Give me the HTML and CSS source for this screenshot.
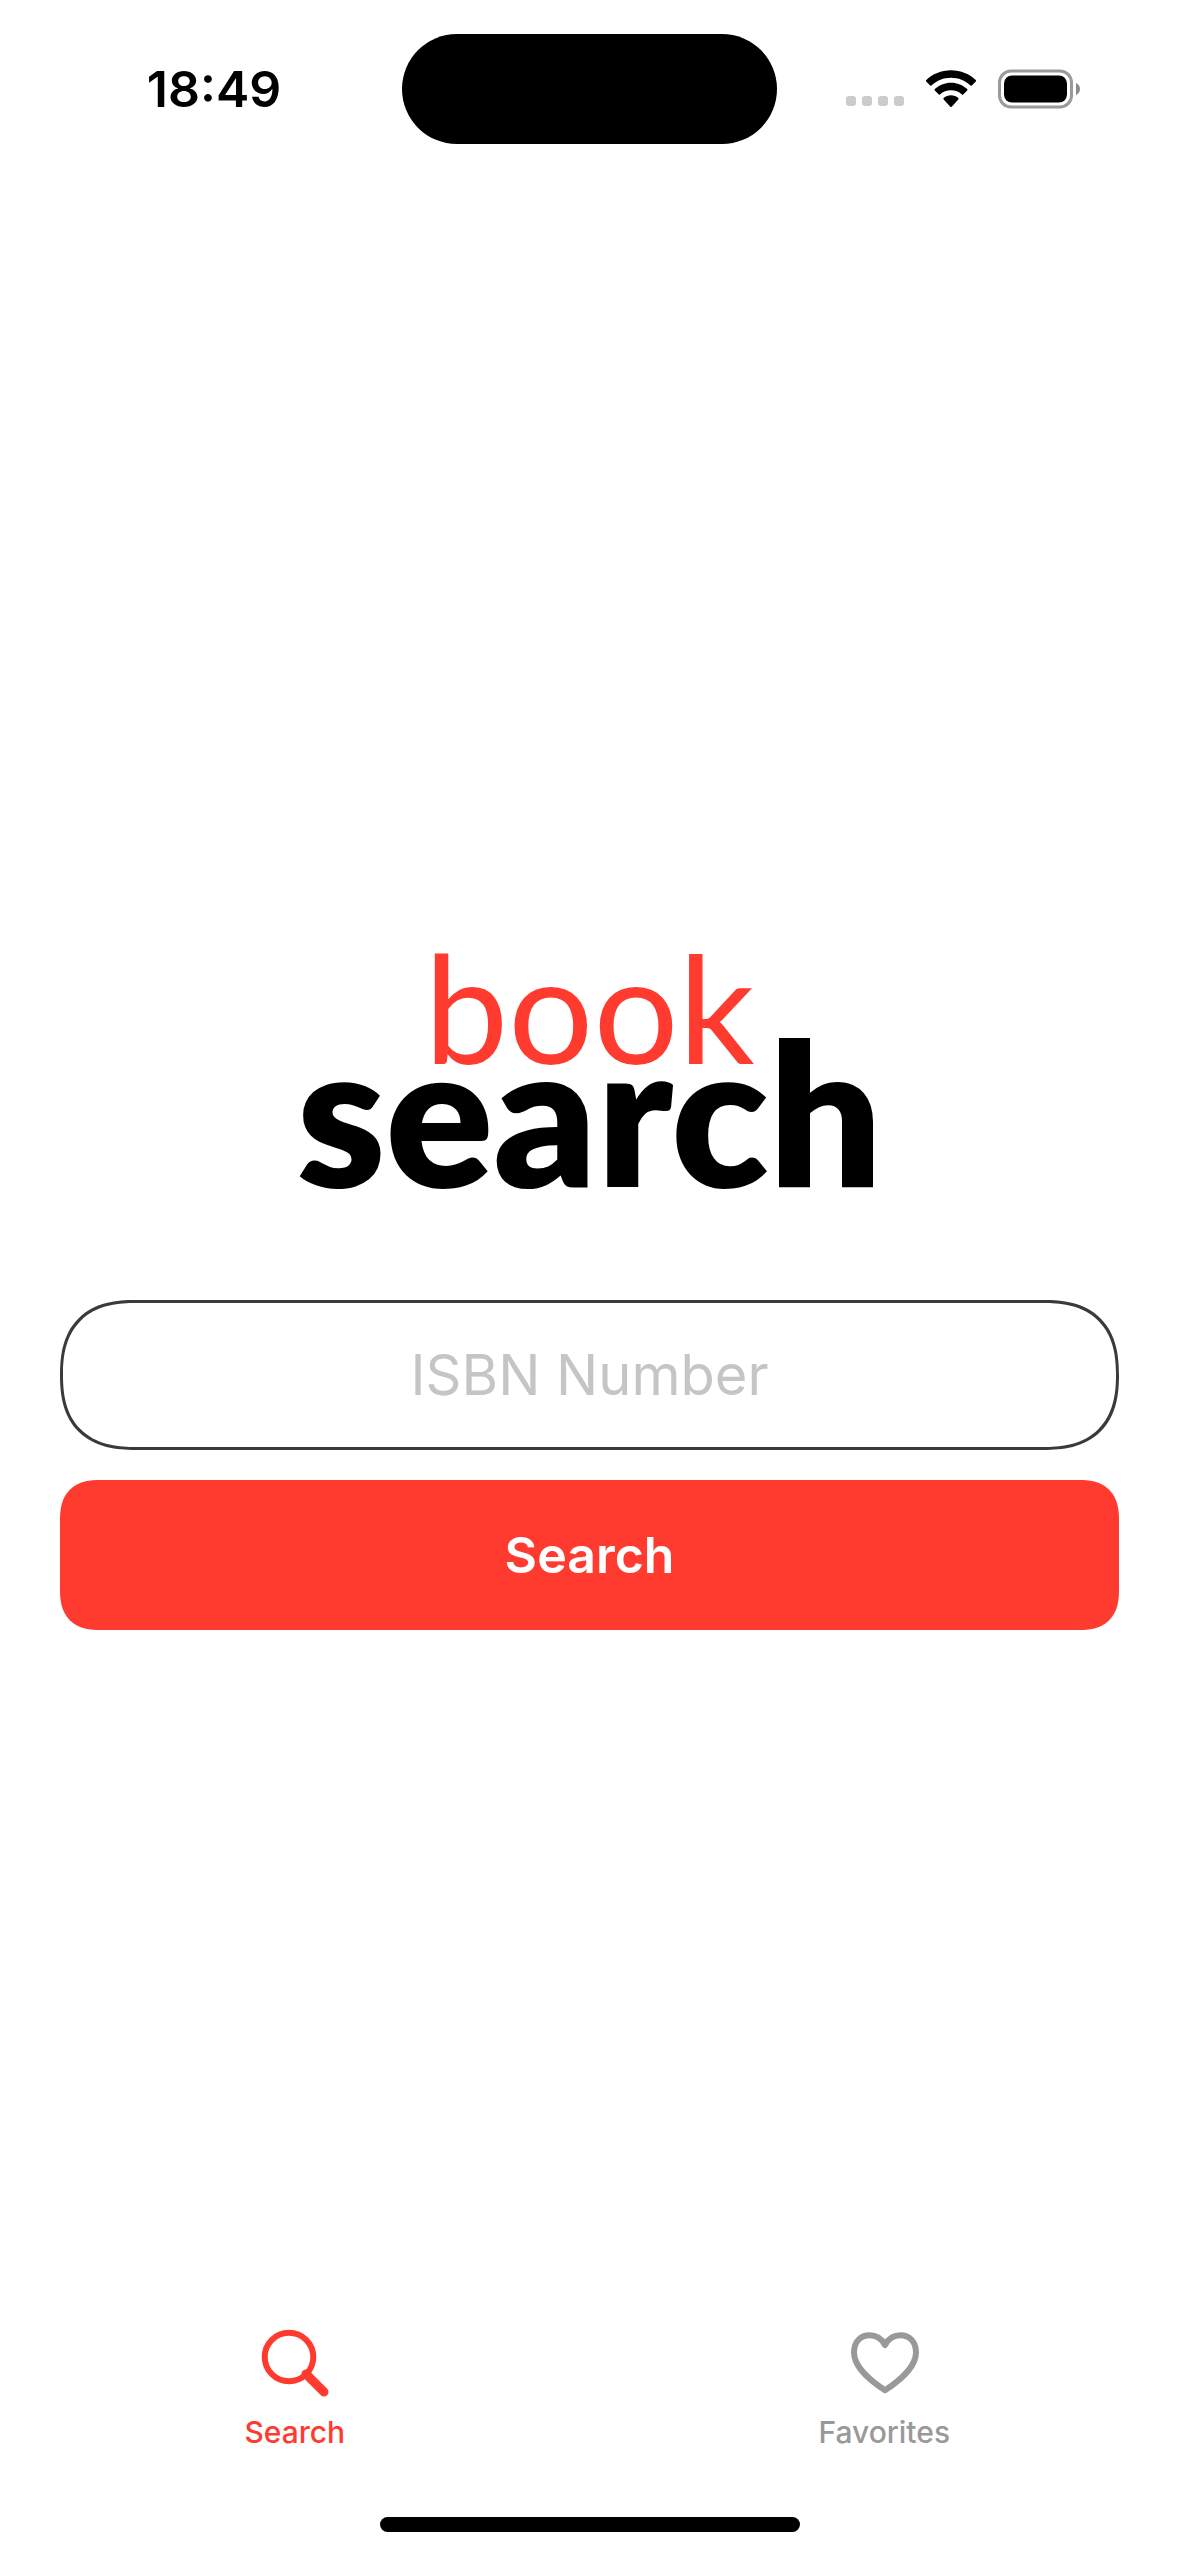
FILE: index.html
```html
<!DOCTYPE html>
<html lang="en">
<head>
<meta charset="utf-8">
<meta name="viewport" content="width=device-width, initial-scale=1">
<title>Book Search</title>
<link rel="stylesheet" href="styles.css">
</head>
<body>
<div class="app">
  <header class="status">
    <div class="status-side"><time class="clock">18:49</time></div>
    <div class="island"></div>
    <div class="status-side indicators">
      <svg class="signal" width="58" height="10" viewBox="0 0 58 10" aria-hidden="true">
        <rect width="10" height="10" rx="3"/><rect x="16" width="10" height="10" rx="3"/><rect x="32" width="10" height="10" rx="3"/><rect x="48" width="10" height="10" rx="3"/>
      </svg>
      <svg width="50" height="38" viewBox="0 0 50 38" aria-hidden="true">
        <path d="M25 .3C34.800 .3 43.500 4 50 10.200Q50.400 10.800 49.800 11.400L45.800 15.400Q45.200 15.900 44.600 15.400C39 10.400 32.400 7.700 25 7.700S11 10.400 5.400 15.400Q4.800 15.900 4.200 15.400L.2 11.400Q-.4 10.800 0 10.200C6.500 4 15.200 .3 25 .3Z"/>
        <path d="M25 12.700C31.200 12.700 36.900 15 41.200 19Q41.900 19.700 41.200 20.400L37.200 24.400Q36.600 25 35.900 24.400C32.900 21.800 29.200 20.300 25 20.300S17.100 21.800 14.100 24.400Q13.400 25 12.800 24.400L8.800 20.400Q8.100 19.700 8.800 19C13.100 15 18.800 12.700 25 12.700Z"/>
        <path d="M25 25.300C27.700 25.300 30.300 26.300 32.300 27.900Q33.100 28.700 32.300 29.500L25.700 36.700Q25 37.400 24.300 36.700L17.700 29.500Q16.900 28.700 17.700 27.900C19.700 26.300 22.300 25.300 25 25.300Z"/>
      </svg>
      <svg width="82" height="40" viewBox="0 0 82 40" aria-hidden="true">
        <rect class="battery-shell" x="1.500" y="2" width="72" height="36" rx="11.500"/>
        <rect x="6" y="6.500" width="63" height="27" rx="8"/>
        <path class="battery-cap" d="M78 14V26C80.500 25 82 22.600 82 20S80.500 15 78 14Z"/>
      </svg>
    </div>
  </header>

  <main class="content">
    <h1 class="logo"><span class="logo-book">book</span><span class="logo-search">search</span></h1>
    <form class="search-form">
      <input class="isbn" type="text" inputmode="numeric" placeholder="ISBN Number" aria-label="ISBN Number">
      <button class="submit" type="button">Search</button>
    </form>
  </main>

  <nav class="tabs">
    <a class="tab tab-active" href="#search" aria-current="page">
      <svg width="70" height="70" viewBox="0 0 70 70" aria-hidden="true">
        <circle cx="29" cy="29" r="24.300" fill="none" stroke="currentColor" stroke-width="6"/>
        <path d="M46 46L64 64" fill="none" stroke="currentColor" stroke-width="9" stroke-linecap="round"/>
      </svg>
      <span>Search</span>
    </a>
    <a class="tab" href="#favorites">
      <svg width="70" height="70" viewBox="0 0 70 70" aria-hidden="true">
        <path d="M36 62.200C52 52 67 38 67 24.500C67 13.500 60.200 7.300 51.500 7.300C44.500 7.300 39.200 11 36 17C32.800 11 27.500 7.300 20.500 7.300C11.800 7.300 5 13.500 5 24.500C5 38 20 52 36 62.200Z" fill="none" stroke="currentColor" stroke-width="6" stroke-linejoin="round"/>
      </svg>
      <span>Favorites</span>
    </a>
  </nav>
  <div class="home-bar"></div>
</div>
</body>
</html>
```
FILE: styles.css
```css
* {
  box-sizing: border-box;
}

body {
  margin: 0;
  background: #fff;
  color: #000;
  font-family: Inter, "Liberation Sans", sans-serif;
}

.app {
  display: flex;
  flex-direction: column;
  min-height: 100vh;
}

.status {
  display: grid;
  grid-template-columns: minmax(0, 1fr) 375px minmax(0, 1fr);
  align-items: center;
  padding: 34px 0;
}

.status-side {
  display: flex;
  justify-content: center;
}

.clock {
  padding-left: 26px;
  font-size: 50px;
  line-height: 60px;
  font-weight: 600;
}

.island {
  height: 110px;
  border-radius: 55px;
  background: #000;
}

.indicators {
  align-items: center;
  gap: 22px;
  padding-right: 30px;
}

.signal {
  margin-top: 24px;
  fill: #cbcbcb;
}

.battery-shell {
  fill: none;
  stroke: #9a9a9a;
  stroke-width: 3;
}

.battery-cap {
  fill: #8c8c8c;
}

.content {
  flex: 1;
  display: flex;
  flex-direction: column;
  justify-content: center;
  padding: 0 60px;
}

.logo {
  display: flex;
  flex-direction: column;
  align-items: center;
  margin: 0;
  padding: 80px 0 136px;
  font-family: Lato, "Open Sans", sans-serif;
}

.logo-book {
  color: #ff3b30;
  font-size: 150px;
  line-height: 100px;
  font-weight: 400;
}

.logo-search {
  font-size: 200px;
  line-height: 108px;
  font-weight: 800;
}

.search-form {
  display: flex;
  flex-direction: column;
  gap: 30px;
}

.isbn,
.submit {
  width: 100%;
  height: 150px;
  font-family: inherit;
  text-align: center;
}

.isbn {
  padding: 0 40px;
  border: 3px solid #3a3a3c;
  border-radius: 64px;
  background: #fff;
  color: #000;
  font-size: 56px;
}

.isbn::placeholder {
  color: #c5c5c7;
  opacity: 1;
}

.submit {
  padding: 0;
  border: 0;
  border-radius: 32px;
  background: #ff3b30;
  color: #fff;
  font-size: 50px;
  font-weight: 600;
}

/* Continuous corners where the browser can draw them */
@supports (corner-shape: superellipse(1.3)) {
  .isbn {
    border-radius: 75px;
    corner-shape: superellipse(1.3);
  }

  .submit {
    border-radius: 40px;
    corner-shape: superellipse(1.3);
  }
}

.tabs {
  display: flex;
}

.tab {
  flex: 1;
  display: flex;
  flex-direction: column;
  align-items: center;
  gap: 16px;
  color: #999;
  font-size: 30px;
  line-height: 36px;
  font-weight: 500;
  text-decoration: none;
}

.tab-active {
  color: #ff3b30;
}

.home-bar {
  width: 420px;
  height: 15px;
  margin: 67px auto 24px;
  border-radius: 8px;
  background: #000;
}
```
